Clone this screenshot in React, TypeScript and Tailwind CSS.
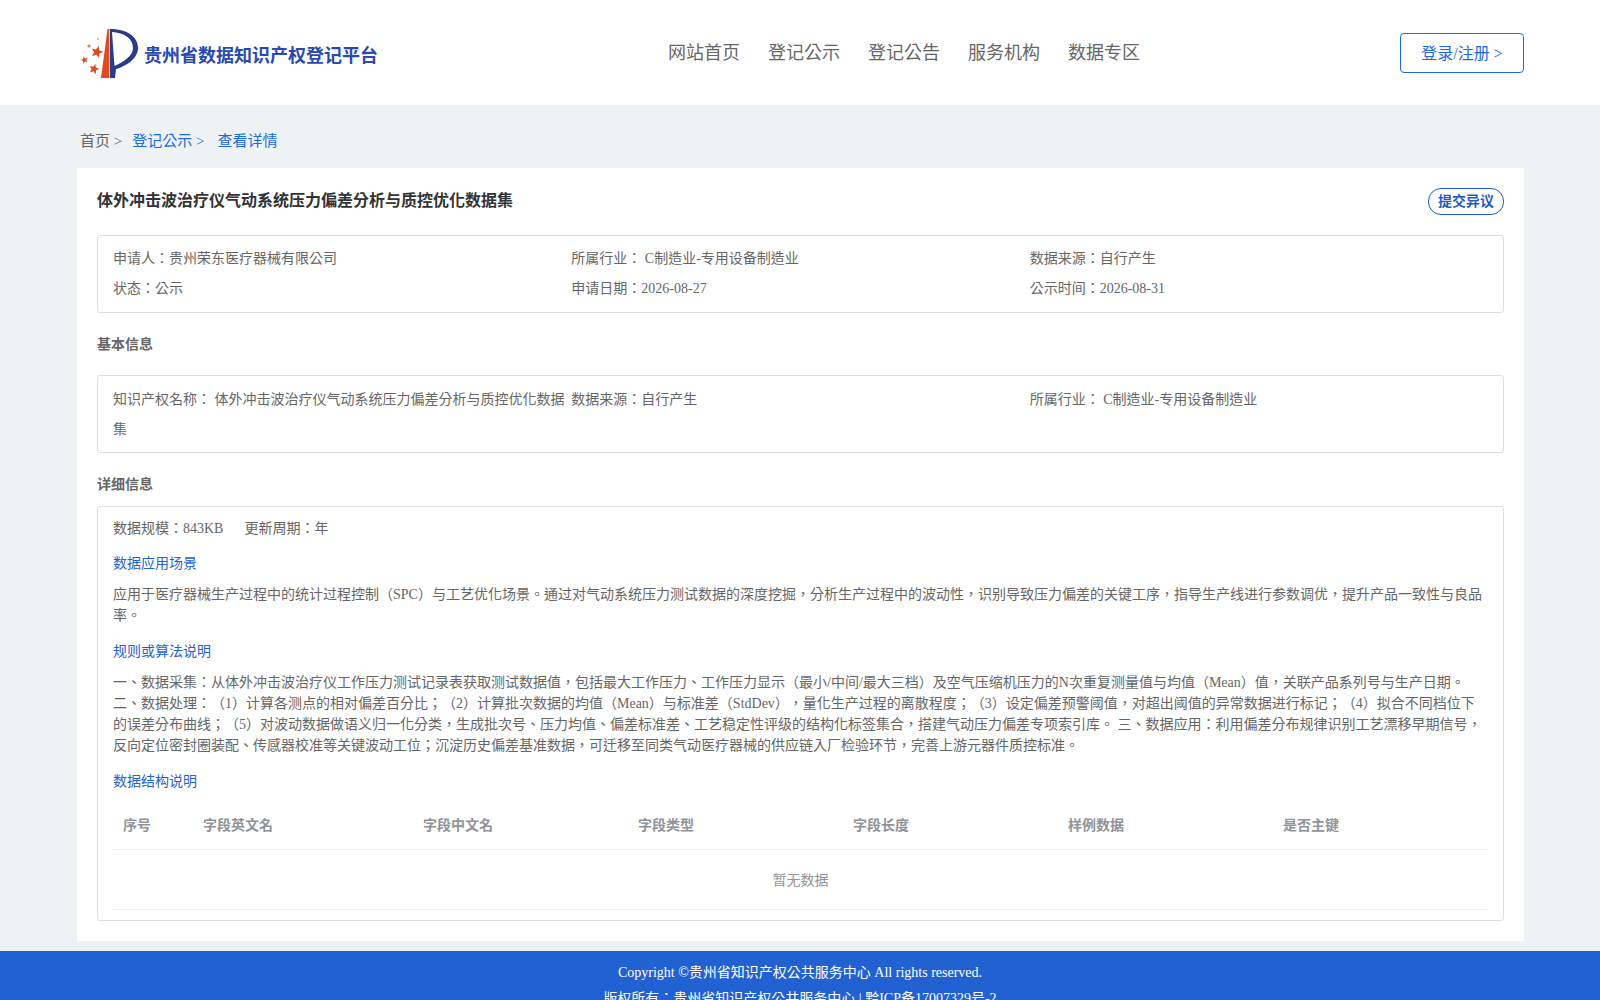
const bodyFont = "font-['Liberation_Serif','Noto_Sans_CJK_TC',serif]"

// five pointed star, tilted a bit like the emblem
function starPoints(cx: number, cy: number, r: number, tilt: number) {
  const pts: string[] = []
  for (let i = 0; i < 10; i++) {
    const rad = i % 2 === 0 ? r : r * 0.42
    const a = ((-90 + tilt + i * 36) * Math.PI) / 180
    pts.push(`${(cx + rad * Math.cos(a)).toFixed(2)},${(cy + rad * Math.sin(a)).toFixed(2)}`)
  }
  return pts.join(" ")
}

function Logo() {
  return (
    <svg width="58" height="52" viewBox="0 0 58 52" className="shrink-0">
      <path d="M27.500 1 L29.300 1 L29.300 50 L21 50 Z" fill="#e2491f" />
      <path
        d="M30 1 C46 1 58 8 58 20 C58 30 47 38 36 41 L35 50 L30 50 Z M32 4 L34.500 38 C43 34 53 28 53 20 C53 10 44 5 32 4 Z"
        fill="#2c3a8c"
        fillRule="evenodd"
      />
      <polygon points={starPoints(17, 24, 6.500, 15)} fill="#e2491f" />
      <polygon points={starPoints(4.500, 32, 4, -15)} fill="#e2491f" />
      <polygon points={starPoints(14, 41, 5.500, 15)} fill="#e2491f" />
      <circle cx="9" cy="18" r="1.600" fill="#e8775a" />
      <circle cx="18" cy="11" r="1" fill="#eb9a85" />
    </svg>
  )
}

function Cell({ children }: { children: React.ReactNode }) {
  return <div className="leading-[30px]">{children}</div>
}

function SubTitle({ children }: { children: React.ReactNode }) {
  return <div className="text-[#1f63d2] leading-[21px]">{children}</div>
}

const columns = ["序号", "字段英文名", "字段中文名", "字段类型", "字段长度", "样例数据", "是否主键"]

export default function App() {
  return (
    <div className={`min-h-screen bg-[#eef2f5] text-[14px] text-[#666] [text-spacing-trim:space-all] ${bodyFont}`}>
      <header className="h-[105px] bg-white px-[80px] flex items-center justify-between">
        <div className="flex items-center w-[420px] pt-[2px]">
          <Logo />
          <span className="ml-[6px] mt-[2px] text-[18px] font-bold text-[#2a49b0] font-['Noto_Sans_CJK_SC',sans-serif]">贵州省数据知识产权登记平台</span>
        </div>
        <nav className="flex gap-[28px] text-[18px] text-[#666] ml-[-92px] mt-[2px]">
          <span>网站首页</span>
          <span>登记公示</span>
          <span>登记公告</span>
          <span>服务机构</span>
          <span>数据专区</span>
        </nav>
        <button className="w-[124px] h-[40px] mr-[-4px] border border-[#1a6be0] rounded-[4px] text-[16px] text-[#1a6be0] pt-[2px]">登录/注册 &gt;</button>
      </header>

      <div className="ml-[77px] mr-[76px] h-[63px] flex items-center text-[15px] pl-[3px] pt-[10px]">
        <span>首页 &gt;</span>
        <span className="ml-[10px] text-[#1a6be0]">登记公示 &gt;</span>
        <span className="ml-[13px] text-[#1a6be0]">查看详情</span>
      </div>

      <main className="ml-[77px] mr-[76px] bg-white px-[20px] pt-[20px] h-[773px]">
        <div className="flex justify-between items-start h-[47px]">
          <h1 className="text-[16px] font-bold text-[#333] leading-[24px] pt-[1px]">体外冲击波治疗仪气动系统压力偏差分析与质控优化数据集</h1>
          <button className="h-[27px] w-[76px] border border-[#1f5cc4] rounded-[13px] text-[14px] font-bold text-[#1f5cc4]">提交异议</button>
        </div>

        <section className="border border-[#dfdfdf] rounded-[3px] px-[15px] py-[8px] grid grid-cols-3">
          <Cell>申请人：贵州荣东医疗器械有限公司</Cell>
          <Cell>所属行业： C制造业-专用设备制造业</Cell>
          <Cell>数据来源：自行产生</Cell>
          <Cell>状态：公示</Cell>
          <Cell>申请日期：2026-08-27</Cell>
          <Cell>公示时间：2026-08-31</Cell>
        </section>

        <h2 className="mt-[21px] mb-[19px] font-bold leading-[22px]">基本信息</h2>

        <section className="border border-[#dfdfdf] rounded-[3px] px-[15px] pt-[9px] pb-[7px] grid grid-cols-3">
          <Cell>知识产权名称： 体外冲击波治疗仪气动系统压力偏差分析与质控优化数据集</Cell>
          <Cell>数据来源：自行产生</Cell>
          <Cell>所属行业： C制造业-专用设备制造业</Cell>
        </section>

        <h2 className="mt-[21px] mb-[10px] font-bold leading-[22px]">详细信息</h2>

        <section className="border border-[#dfdfdf] rounded-[3px] px-[15px] h-[415px]">
          <div className="flex gap-[21px] h-[42px] pt-[11px] leading-[21px]">
            <span>数据规模：843KB</span>
            <span>更新周期：年</span>
          </div>
          <div className="mt-[4px]"><SubTitle>数据应用场景</SubTitle></div>
          <p className="mt-[10px] leading-[21px]">应用于医疗器械生产过程中的统计过程控制（SPC）与工艺优化场景。通过对气动系统压力测试数据的深度挖掘，分析生产过程中的波动性，识别导致压力偏差的关键工序，指导生产线进行参数调优，提升产品一致性与良品率。</p>
          <div className="mt-[15px]"><SubTitle>规则或算法说明</SubTitle></div>
          <p className="mt-[10px] leading-[21px]">一、数据采集：从体外冲击波治疗仪工作压力测试记录表获取测试数据值，包括最大工作压力、工作压力显示（最小/中间/最大三档）及空气压缩机压力的N次重复测量值与均值（Mean）值，关联产品系列号与生产日期。 二、数据处理：（1）计算各测点的相对偏差百分比；（2）计算批次数据的均值（Mean）与标准差（StdDev），量化生产过程的离散程度；（3）设定偏差预警阈值，对超出阈值的异常数据进行标记；（4）拟合不同档位下的误差分布曲线；（5）对波动数据做语义归一化分类，生成批次号、压力均值、偏差标准差、工艺稳定性评级的结构化标签集合，搭建气动压力偏差专项索引库。 三、数据应用：利用偏差分布规律识别工艺漂移早期信号，反向定位密封圈装配、传感器校准等关键波动工位；沉淀历史偏差基准数据，可迁移至同类气动医疗器械的供应链入厂检验环节，完善上游元器件质控标准。</p>
          <div className="mt-[15px]"><SubTitle>数据结构说明</SubTitle></div>
          <div className="mt-[10px] grid grid-cols-[80px_220px_215px_215px_215px_215px_1fr] h-[48px] items-center border-b border-[#ebeef5] font-bold text-[#909399]">
            {columns.map((c) => (
              <div key={c} className="pl-[10px]">{c}</div>
            ))}
          </div>
          <div className="h-[60px] pt-[2px] flex items-center justify-center border-b border-[#ebeef5] text-[#909399]">暂无数据</div>
        </section>
      </main>

      <footer className="mt-[10px] h-[49px] overflow-hidden bg-[#2261d1] text-white text-center leading-[26px] pt-[9px]">
        <div>Copyright ©贵州省知识产权公共服务中心 All rights reserved.</div>
        <div>版权所有：贵州省知识产权公共服务中心 | 黔ICP备17007329号-2</div>
      </footer>
    </div>
  )
}
